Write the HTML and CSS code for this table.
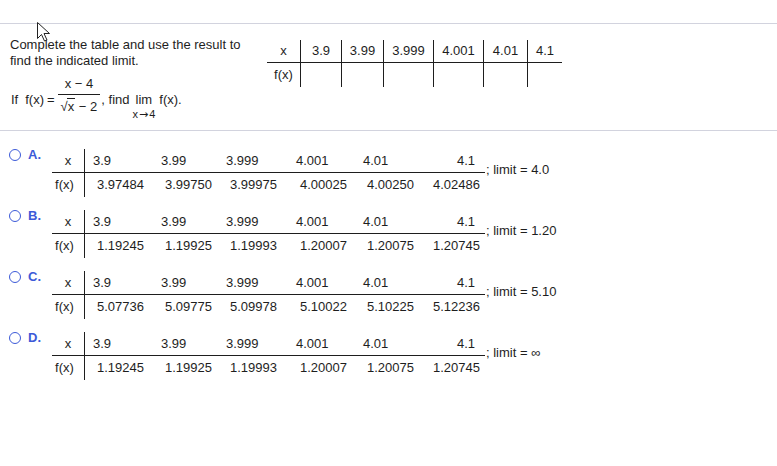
FILE: index.html
```html
<!DOCTYPE html>
<html>
<head>
<meta charset="utf-8">
<link rel="stylesheet" href="styles.css">
</head>
<body>
<div class="page">
  <div class="rule"></div>
  <div class="question">
    <div class="prompt">
      <p class="intro">Complete the table and use the result to<br>find the indicated limit.</p>
      <div class="formula">
        <span class="t if">If</span>
        <span class="t fx">f(x)</span>
        <span class="t eq">=</span>
        <span class="frac">
          <span class="num">x − 4</span>
          <span class="den"><span class="root">√</span><span class="rad">x</span> − 2</span>
        </span>
        <span class="t find">, find</span>
        <span class="lim"><span class="lim-word">lim</span><span class="lim-sub">x<span class="arrow">→</span>4</span></span>
        <span class="t fx2">f(x).</span>
      </div>
    </div>
    <div class="qtable">
      <div class="qc">x</div><div class="qc">3.9</div><div class="qc">3.99</div><div class="qc">3.999</div><div class="qc">4.001</div><div class="qc">4.01</div><div class="qc last">4.1</div>
      <div class="qc r2">f(x)</div><div class="qc r2"></div><div class="qc r2"></div><div class="qc r2"></div><div class="qc r2"></div><div class="qc r2"></div><div class="qc r2 last"></div>
    </div>
  </div>
  <div class="rule"></div>
  <div class="options">
    <div class="option">
      <div class="choice"><span class="radio"></span><span class="letter">A.</span></div>
      <div class="tbl">
        <div class="c h">x</div><div class="c">3.9</div><div class="c">3.99</div><div class="c">3.999</div><div class="c">4.001</div><div class="c">4.01</div><div class="c end">4.1</div>
        <div class="c h f">f(x)</div><div class="c f">3.97484</div><div class="c f">3.99750</div><div class="c f">3.99975</div><div class="c f">4.00025</div><div class="c f">4.00250</div><div class="c f end">4.02486</div>
      </div>
      <div class="limit">; limit = 4.0</div>
    </div>
    <div class="option">
      <div class="choice"><span class="radio"></span><span class="letter">B.</span></div>
      <div class="tbl">
        <div class="c h">x</div><div class="c">3.9</div><div class="c">3.99</div><div class="c">3.999</div><div class="c">4.001</div><div class="c">4.01</div><div class="c end">4.1</div>
        <div class="c h f">f(x)</div><div class="c f">1.19245</div><div class="c f">1.19925</div><div class="c f">1.19993</div><div class="c f">1.20007</div><div class="c f">1.20075</div><div class="c f end">1.20745</div>
      </div>
      <div class="limit">; limit = 1.20</div>
    </div>
    <div class="option">
      <div class="choice"><span class="radio"></span><span class="letter">C.</span></div>
      <div class="tbl">
        <div class="c h">x</div><div class="c">3.9</div><div class="c">3.99</div><div class="c">3.999</div><div class="c">4.001</div><div class="c">4.01</div><div class="c end">4.1</div>
        <div class="c h f">f(x)</div><div class="c f">5.07736</div><div class="c f">5.09775</div><div class="c f">5.09978</div><div class="c f">5.10022</div><div class="c f">5.10225</div><div class="c f end">5.12236</div>
      </div>
      <div class="limit">; limit = 5.10</div>
    </div>
    <div class="option">
      <div class="choice"><span class="radio"></span><span class="letter">D.</span></div>
      <div class="tbl">
        <div class="c h">x</div><div class="c">3.9</div><div class="c">3.99</div><div class="c">3.999</div><div class="c">4.001</div><div class="c">4.01</div><div class="c end">4.1</div>
        <div class="c h f">f(x)</div><div class="c f">1.19245</div><div class="c f">1.19925</div><div class="c f">1.19993</div><div class="c f">1.20007</div><div class="c f">1.20075</div><div class="c f end">1.20745</div>
      </div>
      <div class="limit">; limit = ∞</div>
    </div>
  </div>
  <svg class="cursor" width="14" height="21" viewBox="0 0 14 21">
    <path d="M0.5 0.5 L0.5 16.5 L4.5 12.5 L7.5 19 L10 18 L7 11.5 L12.5 11.5 Z" fill="#fff" stroke="#222" stroke-width="1"/>
  </svg>
</div>
</body>
</html>
```

FILE: styles.css
```css
html, body {
  margin: 0;
  padding: 0;
  background: #fff;
}
body {
  font-family: "Liberation Sans", Arial, sans-serif;
  font-size: 13px;
  color: #1e1e1e;
}
.page {
  position: relative;
  width: 777px;
  height: 466px;
  box-sizing: border-box;
  padding-top: 23px;
}
.rule {
  height: 1px;
  background: #d2d3de;
}
.question {
  display: flex;
  height: 106px;
}
.prompt {
  width: 267px;
  padding-left: 10px;
  box-sizing: border-box;
  padding-top: 13px;
}
.intro {
  margin: 0;
  line-height: 16px;
  white-space: nowrap;
}
.formula {
  display: flex;
  align-items: flex-start;
  margin-top: 7px;
  white-space: nowrap;
}
.t {
  line-height: 16px;
  margin-top: 16px;
}
.if { margin-left: 1px; }
.fx { margin-left: 7px; }
.eq { margin-left: 3px; }
.frac {
  display: flex;
  flex-direction: column;
  align-items: stretch;
  margin-left: 3px;
  text-align: center;
}
.num {
  line-height: 16px;
  padding: 0 3px 2px;
}
.den {
  border-top: 1px solid #1e1e1e;
  line-height: 16px;
  padding: 4px 3px 0;
}
.root {
  margin-right: -1px;
}
.rad {
  border-top: 1px solid #1e1e1e;
  padding: 0 1px;
}
.find { margin-left: 1px; }
.lim {
  display: flex;
  flex-direction: column;
  align-items: center;
  margin-left: 3px;
  margin-top: 16px;
}
.lim-word {
  line-height: 16px;
}
.lim-sub {
  font-size: 11px;
  line-height: 12px;
}
.arrow {
  font-family: "DejaVu Sans", sans-serif;
  font-size: 11px;
  margin: 0 1px;
}
.fx2 { margin-left: 4px; }

.qtable {
  display: grid;
  grid-template-columns: 34px 41px 42px 50px 50px 44px 34px;
  grid-template-rows: 23px 24px;
  margin-top: 16px;
  align-self: flex-start;
}
.qc {
  box-sizing: border-box;
  text-align: center;
  line-height: 22px;
  border-right: 1px solid #1e1e1e;
  border-bottom: 1px solid #1e1e1e;
}
.qc.r2 {
  border-bottom: none;
  line-height: 24px;
}
.qc.last {
  border-right: none;
}

.options {
  padding-top: 18px;
  display: flex;
  flex-direction: column;
  gap: 13px;
}
.option {
  display: flex;
  align-items: flex-start;
}
.choice {
  width: 52px;
  box-sizing: border-box;
  padding-left: 9px;
  display: flex;
  align-items: center;
  gap: 7px;
  margin-top: -1px;
  line-height: 14px;
}
.radio {
  width: 12px;
  height: 12px;
  box-sizing: border-box;
  border: 1px solid #3c5ad8;
  border-radius: 50%;
}
.letter {
  color: #3c5ad8;
  font-weight: bold;
}
.tbl {
  display: grid;
  grid-template-columns: 33px 68px 65px 70px 67px 67px 63px;
  grid-template-rows: 24px 24px;
  white-space: nowrap;
}
.c {
  box-sizing: border-box;
  line-height: 23px;
  padding-left: 8px;
  border-bottom: 1px solid #1e1e1e;
}
.c.f {
  border-bottom: none;
  line-height: 24px;
  padding-left: 12px;
}
.c.h {
  padding: 0;
  text-align: center;
  border-right: 1px solid #1e1e1e;
}
.c.h.f {
  padding-right: 7px;
}
.c.end {
  padding-left: 0;
  padding-right: 10px;
  text-align: right;
}
.c.f.end {
  padding-right: 5px;
}
.limit {
  margin-top: 13px;
  margin-left: 1px;
  line-height: 16px;
  white-space: nowrap;
}
.cursor {
  position: absolute;
  left: 37px;
  top: 22px;
}
```
